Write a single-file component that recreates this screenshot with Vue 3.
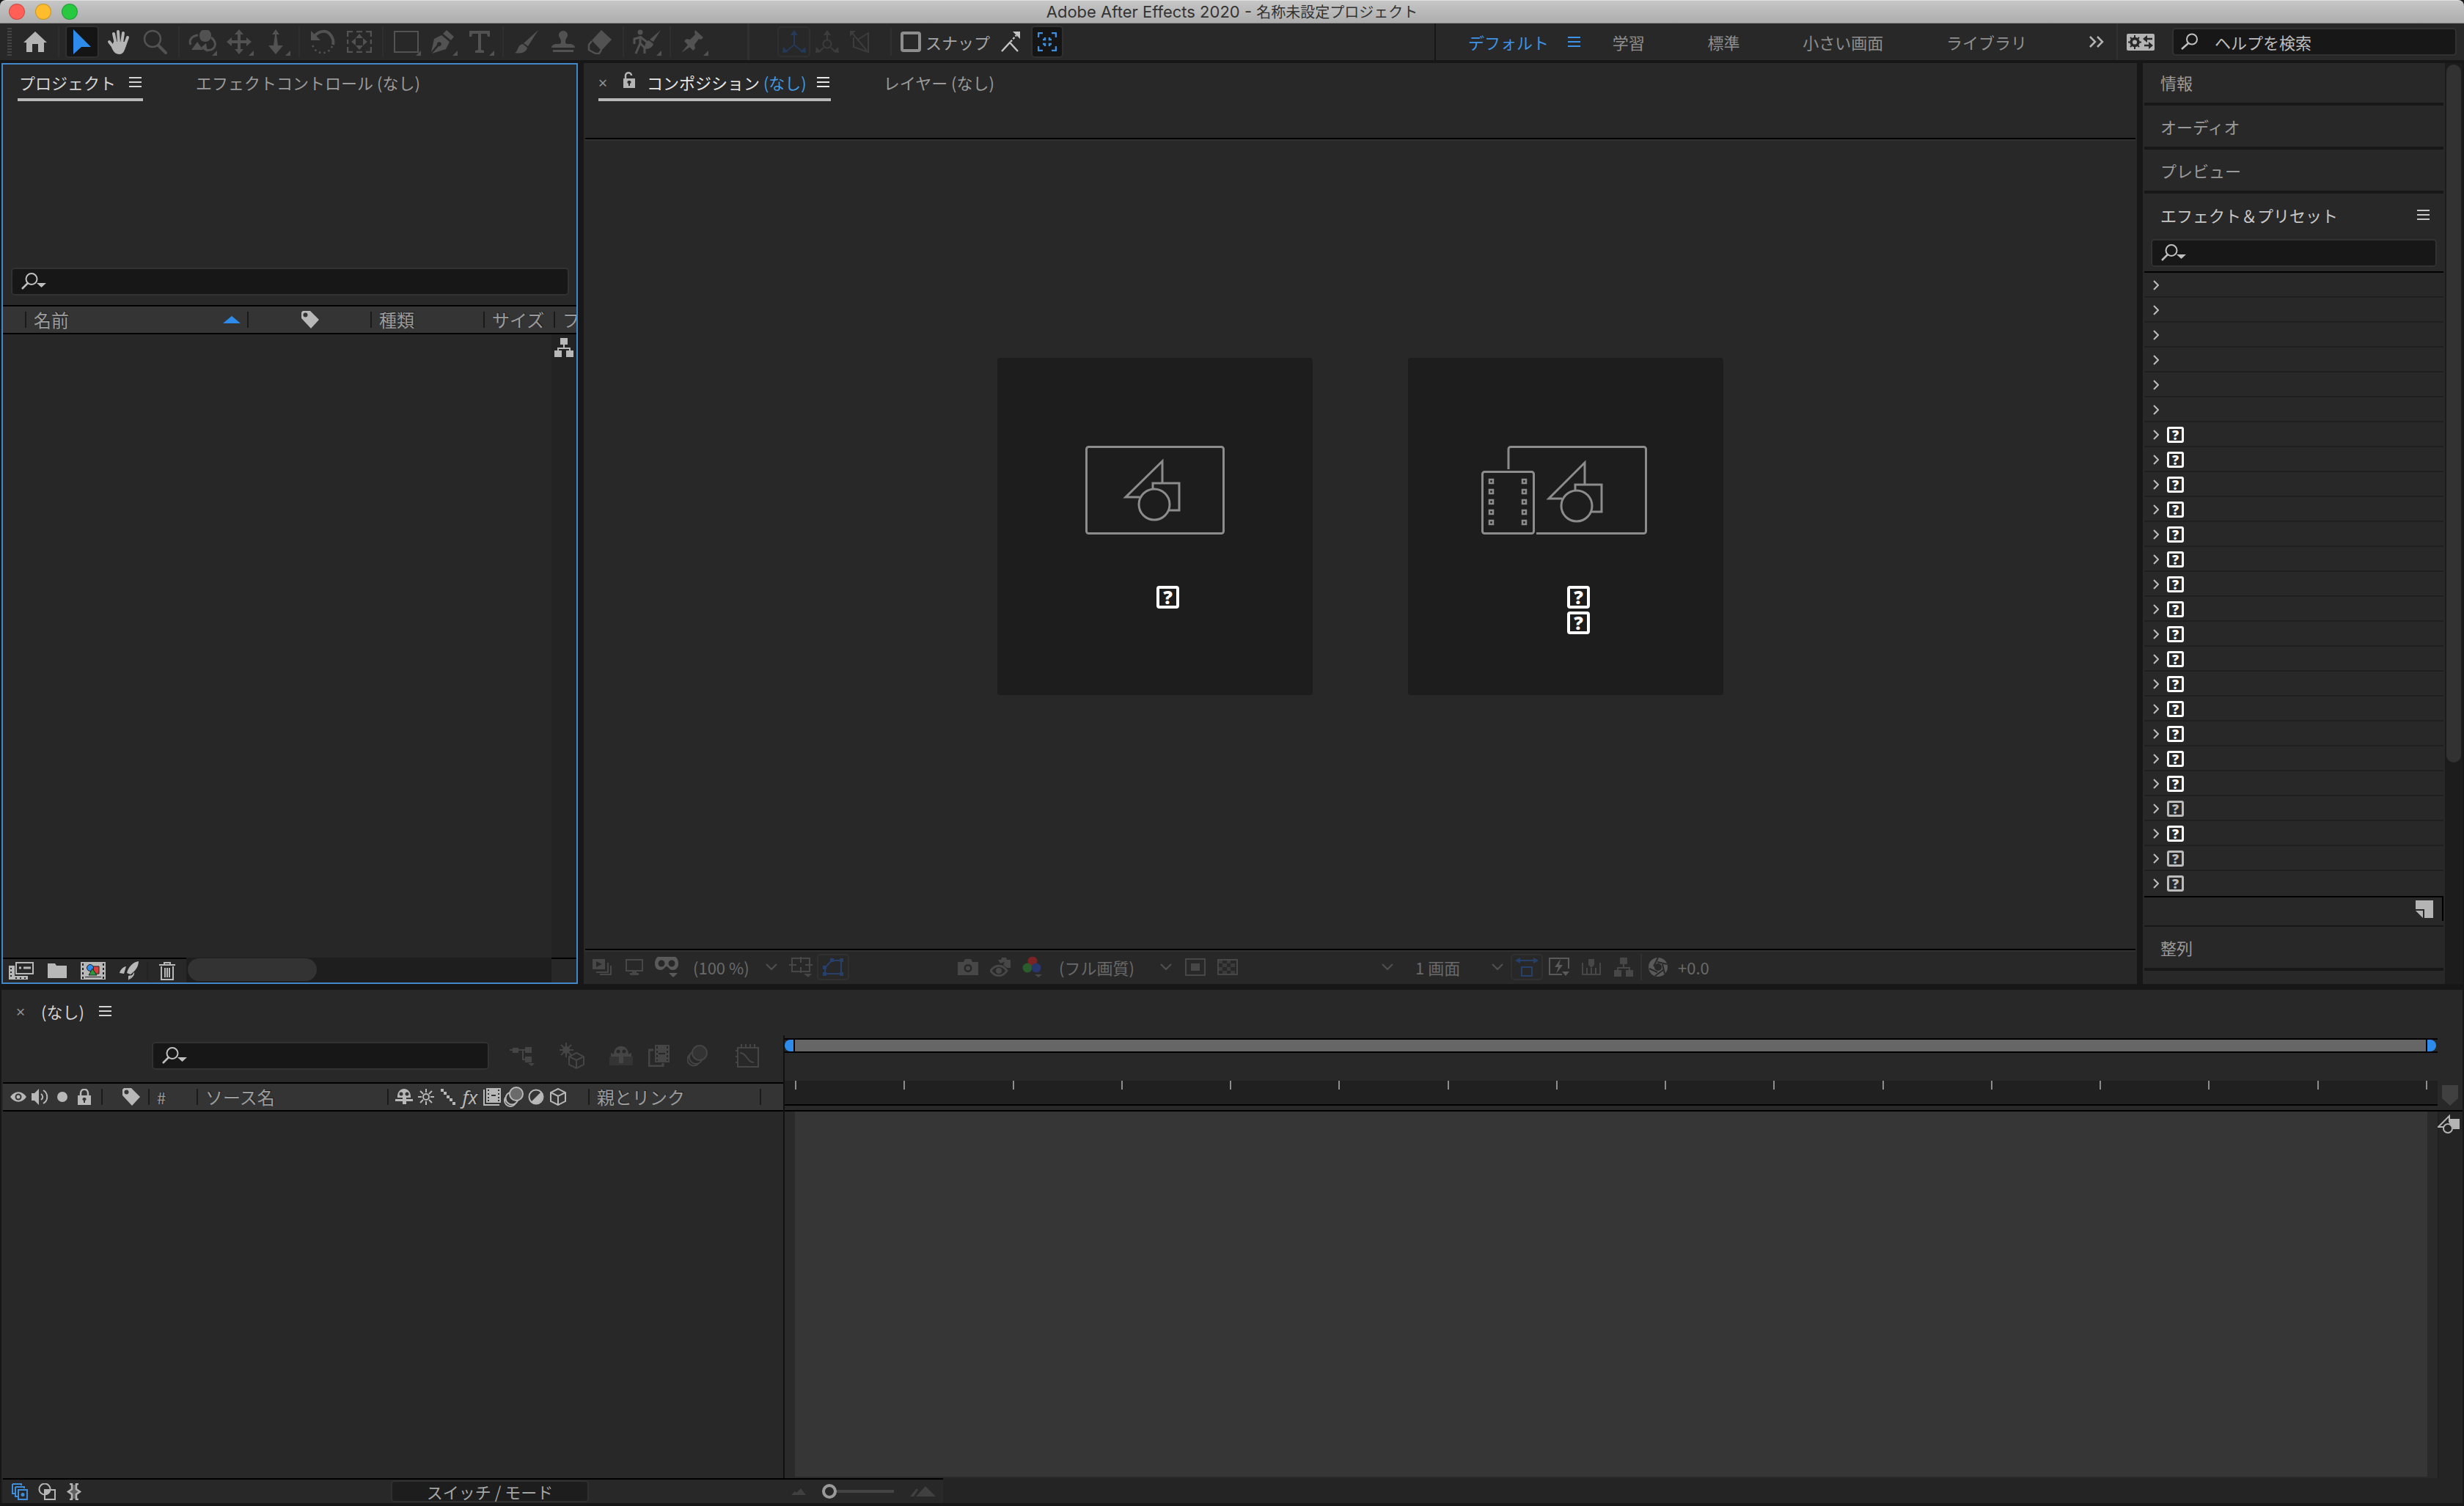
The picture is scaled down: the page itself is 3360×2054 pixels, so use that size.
<script setup>
import { h, ref } from 'vue'

const icons = {
  home: [32, 28, '<path d="M16 0 32 15h-4v13h-8V17h-8v11H4V15H0z"/>'],
  arrow: [24, 34, '<path d="M0 0l24 24H11L0 34z"/>'],
  hand: [32, 34, '<g fill="none" stroke="currentColor" stroke-width="4" stroke-linecap="round"><path d="M9 6l3 14M15 3l1 15M22 5l-2 14M28 11l-4 11M3 17l7 9"/></g><path d="M9 17h16l1 5c-2 7-4 12-9 12-6 0-9-4-11-10z"/>'],
  zoom: [34, 34, '<g fill="none" stroke="currentColor"><circle cx="13" cy="13" r="11" stroke-width="2.5"/><path d="M21 22l10 10" stroke-width="4" stroke-linecap="round"/></g>'],
  orbit: [38, 32, '<path d="M15 7a8 8 0 0 1 16 0c0 5-3 9-8 9-6 0-8-4-8-9z"/><g fill="none" stroke="currentColor" stroke-width="3"><path d="M13 7C5 8 0 13 3 20"/><path d="M31 10c6 5 7 11 3 15-3 3-8 3-12 1"/></g><path d="M4 27l8-11 8 11zM24 18l-7 6 9 6z"/>'],
  pan: [34, 34, '<path d="M17 0l6 7h-4v8h8v-4l7 6-7 6v-4h-8v8h4l-6 7-6-7h4v-8H7v4l-7-6 7-6v4h8V7h-4z"/>'],
  dolly: [22, 34, '<path d="M11 0l5 7h-4l2 15h7L11 34 1 22h7l2-15H6z"/>'],
  rotate: [36, 34, '<path d="M7 9C14 1 24 1 29 8c3 4 4 9 3 13" fill="none" stroke="currentColor" stroke-width="4"/><path d="M2 2v13h13z"/><path d="M31 23A14 14 0 0 1 4 20" fill="none" stroke="currentColor" stroke-width="2.5" stroke-dasharray="2.5 4"/>'],
  anchor: [34, 30, '<path d="M1 8V1h7M13 1h8M26 1h7v7M33 12v6M33 22v7h-7M21 29h-8M8 29H1v-7M1 18v-6" fill="none" stroke="currentColor" stroke-width="2.5"/><path d="M17 4l5 6H12zM17 26l5-6H12zM6 15l6-5v10zM28 15l-6-5v10z"/>'],
  rect: [34, 30, '<path d="M1 1h32v28H1z" fill="none" stroke="currentColor" stroke-width="2"/>'],
  pen: [34, 34, '<path d="M22 1l10 9-4 5-11-9zM15 8l11 9-5 10-19 6 9-10a3 3 0 1 0-2-2L1 31l4-18z"/>'],
  type: [28, 30, '<path d="M0 0h28v8h-3l-1-4h-8v22l4 1v3H8v-3l4-1V4H4L3 8H0z"/>'],
  brush: [34, 32, '<path d="M33 0L19 22l-6-4zM12 19l6 5c-1 6-8 9-17 7 5-2 3-11 11-12z"/>'],
  stamp: [34, 30, '<path d="M17 0a6 6 0 0 1 6 7c-1 3-3 4-3 8 0 3 2 3 5 3 5 0 8 2 8 5H1c0-3 3-5 8-5 3 0 5 0 5-3 0-4-2-5-3-8a6 6 0 0 1 6-7zM3 26h28v3H3z"/>'],
  eraser: [34, 34, '<path d="M19 1l14 13-14 15L6 15z"/><path d="M6 16L2 21v7l9 5h5l3-5" fill="none" stroke="currentColor" stroke-width="2.5"/>'],
  roto: [38, 34, '<circle cx="10" cy="4" r="3.5"/><path d="M10 9v11M10 11L2 13v7M11 11l9 7M10 19l-6 14M10 19l6 6v8" fill="none" stroke="currentColor" stroke-width="3"/><path d="M38 1L28 17l-5-3zM22 15l6 5c-1 5-7 8-14 6 4-2 1-9 8-11z"/>'],
  pin: [32, 32, '<path d="M18 0l11 10-3 3-3-1-6 8 1 5-3 3L3 15l3-3 5 1 7-7-1-3zM8 20l3 3L-1 31z"/>'],
  axisLocal: [32, 32, '<path d="M16 5v15L4 30M16 20l12 10" fill="none" stroke="currentColor" stroke-width="2"/><path d="M16 0l5 7H11zM0 31l1-8 7 7zM32 31l-1-8-7 7z"/>'],
  axisWorld: [32, 32, '<path d="M16 5v9M11 24l-7 6M21 24l7 6" fill="none" stroke="currentColor" stroke-width="2"/><circle cx="16" cy="19" r="5.5" fill="none" stroke="currentColor" stroke-width="2"/><path d="M16 0l5 7H11zM0 31l1-8 7 7zM32 31l-1-8-7 7z"/>'],
  axisView: [30, 32, '<path d="M6 10v13l20 7V4L12 13M4 4l20 24" fill="none" stroke="currentColor" stroke-width="2"/><path d="M1 1h8L1 9z"/>'],
  snapEdge: [26, 28, '<path d="M1 27l11-12 11 12" fill="none" stroke="currentColor" stroke-width="2.5"/><path d="M16 0h10v10z"/><path d="M13 14L21 5" fill="none" stroke="currentColor" stroke-width="2.5" stroke-dasharray="3 2"/>'],
  snapBox: [26, 26, '<path d="M1 7V1h6M19 1h6v6M25 19v6h-6M7 25H1v-6M7 10h3V7M16 7v3h3M7 16h3v3M16 19v-3h3" fill="none" stroke="currentColor" stroke-width="2.5"/>'],
  menu: [17, 15, '<path d="M0 0h17v2H0zM0 6h17v2H0zM0 12h17v2H0z"/>'],
  more: [22, 16, '<path d="M2 1l7 7-7 7M12 1l7 7-7 7" fill="none" stroke="currentColor" stroke-width="2.5"/>'],
  workspace: [38, 23, '<rect width="38" height="23" rx="2"/><g fill="none" stroke="#282828"><circle cx="11" cy="11.500" r="5" stroke-width="3.500"/><path d="M11 2v19M2 11.500h18M5 5l12 13M17 5L5 18" stroke-width="2"/><path d="M35 7h-10M24 16h10" stroke-width="2.500"/></g><circle cx="11" cy="11.500" r="3"/><path d="M28 2v10l-6-5zM30 11v10l6-5z" fill="#282828"/>'],
  search: [24, 24, '<circle cx="15" cy="8.500" r="7" fill="none" stroke="currentColor" stroke-width="2"/><path d="M10 14L1 22" stroke="currentColor" stroke-width="2.500"/>'],
  find: [34, 24, '<circle cx="14" cy="8.500" r="7.500" fill="none" stroke="currentColor" stroke-width="2"/><path d="M9 14L1 22" stroke="currentColor" stroke-width="2.500"/><path d="M21 14h13l-6.500 6z"/>'],
  lockOpen: [18, 22, '<path d="M2 9h16v13H2z"/><path d="M5 9V5c0-5 8-5 8 0" fill="none" stroke="currentColor" stroke-width="2.500"/><path d="M10 12a2 2 0 0 1 1 4v3H9v-3a2 2 0 0 1 1-4z" fill="#282828"/>'],
  lock: [18, 22, '<path d="M0 9h18v13H0z"/><path d="M4 10V6c0-7 10-7 10 0v4" fill="none" stroke="currentColor" stroke-width="2.500"/><path d="M9 12a2 2 0 0 1 1 4v3H8v-3a2 2 0 0 1 1-4z" fill="#343434"/>'],
  sort: [24, 10, '<path d="M12 0l12 10H0z"/>'],
  tag: [25, 24, '<path d="M2 0h10l12 12-11 12L0 10V2z"/><circle cx="5.500" cy="5.500" r="3" fill="#343434"/>'],
  tree: [26, 26, '<path d="M8 0h10v9H8zM0 17h10v9H0zM16 17h10v9H16z"/><path d="M13 8v6M5 18v-4h16v4" fill="none" stroke="currentColor" stroke-width="2"/>'],
  interpret: [34, 24, '<path d="M0 5h8v14h18v5H0zM2 8h2v2H2zm0 5h2v2H2zm0 5h2v2H2zm7 3h2v2H9zm6 0h2v2h-2zm6 0h2v2h-2z" fill-rule="evenodd"/><path d="M10 1h23v15H10z" fill="none" stroke="currentColor" stroke-width="2"/><path d="M14 8h3M20 8h10" stroke="currentColor" stroke-width="3"/>'],
  folder: [26, 20, '<path d="M0 0h10l2 3h14v17H0z"/>'],
  comp: [34, 24, '<path d="M0 0h34v24H0z"/><path d="M2 2h2v3H2zm0 6h2v3H2zm0 6h2v3H2zm0 6h2v3H2zM30 2h2v3h-2zm0 6h2v3h-2zm0 6h2v3h-2zm0 6h2v3h-2zM6 20h22v1H6z" fill="#222"/><path d="M17 6h8v10h-8z" fill="#e03b3b" stroke="#222"/><circle cx="13" cy="8" r="4.500" fill="#2d8ceb" stroke="#222"/><path d="M16 9l6 9H11z" fill="#2c9a3c" stroke="#222"/>'],
  rocket: [26, 26, '<path d="M26 0c-8 1-14 8-16 16l5 2C22 13 26 7 26 0zM9 7C4 8 1 12 0 16l6 1zM17 19l-5 7v-6M20 15c1 4-3 8-7 10"/>'],
  trash: [22, 25, '<path d="M0 4h22M7 4V1h8v3M3 6v18h16V6M8 8v13M11 8v13M14 8v13" fill="none" stroke="currentColor" stroke-width="2"/>'],
  chevronRight: [8, 14, '<path d="M1 1l6 6-6 6" fill="none" stroke="currentColor" stroke-width="2"/>'],
  chevronDown: [16, 10, '<path d="M1 1l7 7 7-7" fill="none" stroke="currentColor" stroke-width="2"/>'],
  newPreset: [24, 24, '<path d="M0 0h24v24H12V12H0zM0 14h10v10z"/>'],
  render: [26, 22, '<path d="M0 0h17v14H0zM5 3l8 4-8 4z" fill-rule="evenodd"/><path d="M21 5v13H5M25 9v12H10" fill="none" stroke="currentColor" stroke-width="2"/>'],
  monitor: [24, 22, '<path d="M1 1h22v15H1z" fill="none" stroke="currentColor" stroke-width="2"/><path d="M9 17h6v2h3v3H6v-3h3z"/>'],
  goggles: [32, 28, '<path d="M4 0h24c3 2 4 6 4 9 0 6-3 9-8 9-4 0-6-5-8-5s-4 5-8 5c-5 0-8-3-8-9 0-3 1-7 4-9z"/><circle cx="9" cy="9" r="4.500" fill="#282828"/><circle cx="23" cy="9" r="4.500" fill="#282828"/><path d="M19 22h12l-6 6z"/>'],
  grid: [32, 28, '<path d="M4 2h24v18H4zM16 0v8M16 14v8M0 11h10M22 11h10" fill="none" stroke="currentColor" stroke-width="2"/><path d="M20 23h11l-5 5z"/>'],
  mask: [28, 26, '<path d="M12 4h13v18H3v-8z" fill="none" stroke="currentColor" stroke-width="2"/><path d="M10 1h5v5h-5zM23 1h5v5h-5zM0 11h5v5H0zM0 20h5v5H0zM23 20h5v5h-5z"/>'],
  camera: [28, 22, '<path d="M0 4h8l2-4h8l2 4h8v18H0zM14 7a5.500 5.500 0 1 0 0 11 5.500 5.500 0 0 0 0-11z" fill-rule="evenodd"/><circle cx="14" cy="12.500" r="3"/>'],
  showShot: [28, 26, '<path d="M11 3h4l1-3h6l1 3h5v11h-5l-5-4 2-4-6 2z"/><path d="M1 18c6-9 16-9 22 0-6 9-16 9-22 0z" fill="none" stroke="currentColor" stroke-width="3"/><circle cx="12" cy="18" r="4"/>'],
  channels: [28, 28, '<circle cx="14" cy="6" r="6.500" fill="#7c2424"/><circle cx="7" cy="15" r="6.500" fill="#2b5c2b"/><circle cx="19" cy="15" r="6.500" fill="#29366e"/><path d="M17 24h10l-5 4z"/>'],
  region: [28, 24, '<path d="M1 1h26v22H1z" fill="none" stroke="currentColor" stroke-width="2"/><path d="M8 7h12v10H8z"/>'],
  checker: [28, 22, '<path d="M1 1h26v20H1z" fill="none" stroke="currentColor" stroke-width="2"/><path d="M2 2h5v4H2zM13 2h5v4h-5zM7 6h6v5H7zM18 6h6v5h-6zM2 11h5v5H2zM13 11h5v5h-5zM7 16h6v4H7zM18 16h6v4h-6z" opacity=".6"/>'],
  pixelAspect: [32, 26, '<path d="M6 4h20M9 13h14v12H9z" fill="none" stroke="currentColor" stroke-width="2"/><path d="M0 4l7-4v8zM32 4l-7-4v8z"/>'],
  fast: [28, 26, '<path d="M18 23H1V1h26v14" fill="none" stroke="currentColor" stroke-width="2"/><path d="M16 2L8 13h5l-3 9 9-12h-5zM18 19h10l-5 6z"/>'],
  timelineIcon: [26, 22, '<path d="M1 5v16h24V5M7 21v-9M13 21v-9M19 21v-9" fill="none" stroke="currentColor" stroke-width="2"/><path d="M9 0h8v8l-4 4-4-4z"/>'],
  aperture: [26, 26, '<circle cx="13" cy="13" r="9" fill="none" stroke="currentColor" stroke-width="8"/><path d="M13 0l-6 12M25 9l-13-3M22 22l-3-13M9 25l11-8M1 15l11 5" stroke="#282828" stroke-width="2"/>'],
  flow: [36, 28, '<path d="M0 6h30M18 6v13h10" fill="none" stroke="currentColor" stroke-width="2"/><path d="M4 3h8v7H4zM21 2h9v8h-9zM21 15h9v8h-9zM25 24h9l-4 4z"/>'],
  draft3d: [34, 36, '<path d="M9 0v20M0 10h19M2 3l14 14M16 3L2 17" stroke="currentColor" stroke-width="2"/><circle cx="9" cy="10" r="5"/><path d="M23 14l10 5v11l-10 5-10-5V19zM13 19l10 5 10-5M23 24v11" fill="none" stroke="currentColor" stroke-width="2"/>'],
  shyBig: [32, 28, '<path d="M6 12c0-15 20-15 20 0l4-2v5H2v-5z"/><path d="M13 14h6v10h-6z"/><path d="M0 15h32v12H0z" opacity=".4"/><circle cx="12" cy="8" r="2.500" fill="#282828"/><circle cx="20" cy="8" r="2.500" fill="#282828"/>'],
  frames: [30, 30, '<path d="M9 0h20v24H9z"/><path d="M7 7H1v22h19v-4" fill="none" stroke="currentColor" stroke-width="3"/><path d="M11 2h2v3h-2zm0 6h2v3h-2zm0 6h2v3h-2zm0 6h2v2h-2zM25 2h2v3h-2zm0 6h2v3h-2zm0 6h2v3h-2zm0 6h2v2h-2zM14 11h9v2h-9z" fill="#282828"/>'],
  blur: [28, 30, '<circle cx="9" cy="20" r="8" fill="none" stroke="currentColor" stroke-width="2"/><circle cx="11" cy="17" r="8.500" fill="#343434" stroke="currentColor" stroke-width="2"/><circle cx="17" cy="11" r="9" fill="#6a6a6a" stroke="currentColor" stroke-width="2"/>'],
  blurBig: [28, 30, '<circle cx="9" cy="20" r="8.500" fill="none" stroke="currentColor" stroke-width="2"/><circle cx="12" cy="17" r="9" fill="#282828" stroke="currentColor" stroke-width="2"/><circle cx="17" cy="11" r="10" fill="#333" stroke="currentColor" stroke-width="2"/>'],
  graph: [32, 32, '<path d="M3 5h28v26H3zM8 0v5M14 0v5M20 0v5M26 0v5M0 9h3M0 17h3M0 25h3M6 12c10 0 9 13 19 13" fill="none" stroke="currentColor" stroke-width="2"/>'],
  eye: [22, 14, '<path d="M0 7C6-2 16-2 22 7c-6 9-16 9-22 0z"/><circle cx="11" cy="7" r="4.500" fill="#343434"/><circle cx="11" cy="7" r="2.500"/>'],
  speaker: [24, 22, '<path d="M0 6h4l6-6v22l-6-6H0z"/><path d="M13 7c3 2 3 6 0 8M16 2c7 4 7 14 0 18" fill="none" stroke="currentColor" stroke-width="2"/>'],
  dot: [14, 14, '<circle cx="7" cy="7" r="7"/>'],
  shy: [24, 22, '<path d="M3 12c-1-16 19-16 18 0zM0 14h24v3H0zM10 12h5v9h-5z"/><circle cx="8" cy="7" r="2.500" fill="#343434"/><circle cx="16" cy="7" r="2.500" fill="#343434"/>'],
  sun: [22, 22, '<circle cx="11" cy="11" r="4" fill="none" stroke="currentColor" stroke-width="2"/><path d="M11 0v5M11 17v5M0 11h5M17 11h5M3 3l4 4M15 15l4 4M19 3l-4 4M7 15l-4 4" stroke="currentColor" stroke-width="2"/>'],
  quality: [20, 22, '<path d="M0 0h4v4H0zM4 4h4v4H4zM8 9h4v4H8zM12 13h4v4h-4zM16 18h4v4h-4z"/>'],
  film: [24, 24, '<path d="M4 0h20v20H4z"/><path d="M1 2v21h21" fill="none" stroke="currentColor" stroke-width="2"/><path d="M6 2h2v2H6zm0 5h2v2H6zm0 5h2v2H6zm0 4h2v2H6zM20 2h2v2h-2zm0 5h2v2h-2zm0 5h2v2h-2zm0 4h2v2h-2zM11 9h6v2h-6z" fill="#343434"/>'],
  adjust: [22, 22, '<circle cx="11" cy="11" r="9.500" fill="none" stroke="currentColor" stroke-width="2"/><path d="M18 4L4 18a10 10 0 0 0 14-14z"/>'],
  cube: [22, 24, '<path d="M11 1l10 5v12l-10 5-10-5V6zM1 6l10 5 10-5M11 11v12" fill="none" stroke="currentColor" stroke-width="2"/>'],
  layers: [22, 23, '<path d="M1 1h12v2M1 1v13h3M5 5h12v2M5 5v13h3M9 9h12v13H9z" fill="none" stroke="currentColor" stroke-width="2"/><circle cx="15" cy="15.500" r="2.500"/>'],
  modes: [24, 23, '<circle cx="9" cy="8" r="7.500" fill="none" stroke="currentColor" stroke-width="2"/><path d="M9 9h14v13H9z" fill="none" stroke="currentColor" stroke-width="2"/><path d="M9 9h7c0 4-3 7-7 7z"/>'],
  braces: [24, 23, '<path d="M6 1h3v7l-5 3.500L9 15v7H6M18 1h-3v7l5 3.500-5 3.500v7h3" fill="none" stroke="currentColor" stroke-width="2.500"/><path d="M9 2h6v6l4 3.500-4 3.500v6H9v-6l-4-3.500L9 8z" opacity=".4"/>'],
  hillSmall: [20, 9, '<path d="M0 9l5-5 2 2 6-6 7 9z"/>'],
  hillBig: [36, 14, '<path d="M0 14L9 3l2 2-6 9zM8 14L21 0l14 14z"/>'],
  marker: [22, 28, '<path d="M0 0h22v18L11 28 0 18z"/>'],
  shapes: [30, 26, '<path d="M16 6h14v14h-9a8 8 0 0 0-5-7z"/><path d="M8 17H1L16 2v9" fill="none" stroke="currentColor" stroke-width="2"/><circle cx="14" cy="19" r="6" fill="none" stroke="currentColor" stroke-width="2"/>'],
  newComp: [190, 121, '<g fill="none" stroke="currentColor" stroke-width="3"><rect x="1.500" y="1.500" width="187" height="118" rx="3"/><path d="M105 50V21L55 70h19M92 60v-9h36v37h-14"/><circle cx="94" cy="80" r="21"/></g>'],
  newCompFootage: [226, 121, '<g fill="none" stroke="currentColor" stroke-width="3"><path d="M37 32V4.500a3 3 0 0 1 3-3h181.500a3 3 0 0 1 3 3v112a3 3 0 0 1-3 3H75"/><rect x="1.500" y="35.500" width="70" height="84" rx="3"/><path d="M141 52V23L92 72h18M128 62v-9h36v37h-14"/><circle cx="130" cy="82" r="21"/></g><g fill="none" stroke="currentColor" stroke-width="2.500"><path d="M11 46h5v5h-5zM11 60h5v5h-5zM11 74h5v5h-5zM11 88h5v5h-5zM11 102h5v5h-5zM56 46h5v5h-5zM56 60h5v5h-5zM56 74h5v5h-5zM56 88h5v5h-5zM56 102h5v5h-5z"/></g>'],
}

const Icon = (props) => {
  const [width, height, body] = icons[props.name]
  return h('svg', { width, height, viewBox: `0 0 ${width} ${height}`, fill: 'currentColor', 'aria-hidden': 'true', innerHTML: body })
}
Icon.props = ['name']

const toolGroups = [
  [{ icon: 'home', label: 'ホーム', on: true }],
  [{ icon: 'arrow', label: '選択', active: true }, { icon: 'hand', label: '手のひら', on: true }, { icon: 'zoom', label: 'ズーム' }],
  [{ icon: 'orbit', label: 'カメラ', more: true }, { icon: 'pan', label: 'パン', more: true }, { icon: 'dolly', label: 'ドリー', more: true }],
  [{ icon: 'rotate', label: '回転' }, { icon: 'anchor', label: 'アンカーポイント' }],
  [{ icon: 'rect', label: '長方形', more: true }, { icon: 'pen', label: 'ペン', more: true }, { icon: 'type', label: '文字', more: true }],
  [{ icon: 'brush', label: 'ブラシ' }, { icon: 'stamp', label: 'コピースタンプ' }, { icon: 'eraser', label: '消しゴム' }],
  [{ icon: 'roto', label: 'ロトブラシ', more: true }],
  [{ icon: 'pin', label: 'パペットピン', more: true }],
]
const workspaces = ['学習', '標準', '小さい画面', 'ライブラリ']
const closedPanels = ['情報', 'オーディオ', 'プレビュー']
const dimRows = [21, 23, 24]
const effects = Array.from({ length: 25 }, (_, i) => ({ id: i, missing: i > 5, dim: dimRows.includes(i) }))
const switches = ['shy', 'sun', 'quality', 'fx', 'film', 'blur', 'adjust', 'cube']
const snap = ref(false)
const zoomLevel = ref(0)
</script>

<template>
  <div class="app">
    <header class="titlebar">
      <div class="lights">
        <button class="light red" aria-label="閉じる"></button>
        <button class="light yellow" aria-label="しまう"></button>
        <button class="light green" aria-label="拡大"></button>
      </div>
      <h1>Adobe After Effects 2020 - <span>名称未設定プロジェクト</span></h1>
    </header>

    <nav class="toolbar">
      <div class="grip"></div>
      <div v-for="(group, g) in toolGroups" :key="g" class="group">
        <button v-for="t in group" :key="t.icon" class="tool" :class="{ on: t.on, active: t.active, more: t.more }" :aria-label="t.label">
          <Icon :name="t.icon" />
        </button>
      </div>
      <div class="axes">
        <button class="axis picked" aria-label="ローカル軸"><Icon name="axisLocal" /></button>
        <button class="axis" aria-label="ワールド軸"><Icon name="axisWorld" /></button>
        <button class="axis" aria-label="ビュー軸"><Icon name="axisView" /></button>
      </div>
      <label class="snap"><input v-model="snap" type="checkbox" />スナップ</label>
      <button class="snap-edge" aria-label="エッジにスナップ"><Icon name="snapEdge" /></button>
      <button class="snap-box" aria-label="フィーチャにスナップ"><Icon name="snapBox" /></button>
      <div class="workspaces">
        <a href="#" class="current">デフォルト<Icon name="menu" /></a>
        <a v-for="w in workspaces" :key="w" href="#">{{ w }}</a>
      </div>
      <button class="overflow" aria-label="その他"><Icon name="more" /></button>
      <button class="manage" aria-label="ワークスペース設定"><Icon name="workspace" /></button>
      <label class="field help">
        <Icon name="search" />
        <input type="text" placeholder="ヘルプを検索" aria-label="ヘルプを検索" />
      </label>
    </nav>

    <main class="upper">
      <section class="panel project">
        <div class="tabs">
          <a href="#" class="tab selected">プロジェクト<Icon name="menu" /></a>
          <a href="#" class="tab">エフェクトコントロール (なし)</a>
        </div>
        <div class="preview"></div>
        <label class="field find">
          <Icon name="find" />
          <input type="text" aria-label="プロジェクトを検索" />
        </label>
        <table class="columns">
          <thead>
            <tr>
              <th class="c-edge"></th>
              <th class="c-name"><div class="cell">名前<Icon name="sort" class="sort" /></div></th>
              <th class="c-label"><div class="cell"><Icon name="tag" class="label-tag" /></div></th>
              <th class="c-kind"><div class="cell">種類</div></th>
              <th class="c-size"><div class="cell">サイズ</div></th>
              <th><div class="cell">フ</div></th>
            </tr>
          </thead>
        </table>
        <div class="items">
          <div class="items-list"></div>
          <div class="items-rail"><Icon name="tree" /></div>
        </div>
        <footer class="project-foot">
          <div class="foot-tools">
            <button aria-label="フッテージを変換"><Icon name="interpret" /></button>
            <button aria-label="新規フォルダー"><Icon name="folder" /></button>
            <button aria-label="新規コンポジション"><Icon name="comp" /></button>
            <button aria-label="プロジェクト設定"><Icon name="rocket" /></button>
            <button class="bin" aria-label="削除"><Icon name="trash" /></button>
          </div>
          <div class="hscroll"><div class="hthumb"></div></div>
          <div class="corner"></div>
        </footer>
      </section>

      <section class="panel viewer">
        <div class="tabs">
          <div class="tab selected">
            <button class="close" aria-label="閉じる">×</button>
            <Icon name="lockOpen" class="lock" />
            <a href="#">コンポジション <span class="none">(なし)</span></a>
            <Icon name="menu" />
          </div>
          <a href="#" class="tab">レイヤー (なし)</a>
        </div>
        <div class="strip"></div>
        <div class="stage">
          <button class="card" aria-label="新規コンポジション">
            <Icon name="newComp" />
            <span class="glyphs"><span class="missing big">?</span></span>
          </button>
          <button class="card" aria-label="フッテージから新規コンポジション">
            <Icon name="newCompFootage" />
            <span class="glyphs"><span class="missing big">?</span><span class="missing big">?</span></span>
          </button>
        </div>
        <footer class="viewer-foot">
          <div class="run">
            <button aria-label="常にプレビュー"><Icon name="render" /></button>
            <button aria-label="メインビュー"><Icon name="monitor" /></button>
            <button class="lit" aria-label="VR"><Icon name="goggles" /></button>
          </div>
          <div class="pick mag"><select aria-label="拡大率"><option>(100 %)</option></select><Icon name="chevronDown" /></div>
          <div class="run">
            <button aria-label="グリッド"><Icon name="grid" /></button>
            <button class="boxed" aria-label="マスク表示"><Icon name="mask" /></button>
          </div>
          <div class="run shots">
            <button aria-label="スナップショット"><Icon name="camera" /></button>
            <button aria-label="スナップショットを表示"><Icon name="showShot" /></button>
            <button aria-label="チャンネル"><Icon name="channels" /></button>
          </div>
          <div class="pick res"><select aria-label="解像度"><option>(フル画質)</option></select><Icon name="chevronDown" /></div>
          <div class="run">
            <button aria-label="目標範囲"><Icon name="region" /></button>
            <button aria-label="透明グリッド"><Icon name="checker" /></button>
          </div>
          <div class="pick cam"><select aria-label="3D ビュー"><option></option></select><Icon name="chevronDown" /></div>
          <div class="pick views"><select aria-label="ビューのレイアウト"><option>1 画面</option></select><Icon name="chevronDown" /></div>
          <div class="run">
            <button class="boxed" aria-label="ピクセル縦横比"><Icon name="pixelAspect" /></button>
            <button class="lit" aria-label="高速プレビュー"><Icon name="fast" /></button>
            <button aria-label="タイムライン"><Icon name="timelineIcon" /></button>
            <button aria-label="フローチャート"><Icon name="tree" /></button>
          </div>
          <div class="run exposure">
            <button class="lit" aria-label="露出をリセット"><Icon name="aperture" /></button>
            <span>+0.0</span>
          </div>
        </footer>
      </section>

      <aside class="side">
        <div class="stack">
          <h2 v-for="p in closedPanels" :key="p" class="folded">{{ p }}</h2>
          <div class="effects-head">
            <h2>エフェクト＆プリセット</h2>
            <Icon name="menu" />
          </div>
          <label class="field find fx-find">
            <Icon name="find" />
            <input type="text" aria-label="エフェクトを検索" />
          </label>
          <ul class="effects">
            <li v-for="e in effects" :key="e.id">
              <Icon name="chevronRight" />
              <span v-if="e.missing" class="missing" :class="{ dim: e.dim }">?</span>
            </li>
          </ul>
          <div class="effects-foot">
            <button aria-label="新規アニメーションプリセット"><Icon name="newPreset" /></button>
          </div>
          <h2 class="folded">整列</h2>
        </div>
        <div class="vscroll"><div class="vthumb"></div></div>
      </aside>
    </main>

    <section class="timeline">
      <div class="tl-tabs">
        <button class="close" aria-label="閉じる">×</button>
        <a href="#">(なし)</a>
        <Icon name="menu" />
      </div>
      <div class="tl-grid">
        <div class="tl-left">
          <div class="tl-tools">
            <label class="field find tl-find">
              <Icon name="find" />
              <input type="text" aria-label="レイヤーを検索" />
            </label>
            <button class="wide" aria-label="ミニフローチャート"><Icon name="flow" /></button>
            <button class="wide" aria-label="ドラフト 3D"><Icon name="draft3d" /></button>
            <button class="first" aria-label="シャイ"><Icon name="shyBig" /></button>
            <button aria-label="フレームブレンド"><Icon name="frames" /></button>
            <button aria-label="モーションブラー"><Icon name="blurBig" /></button>
            <button class="graph" aria-label="グラフエディター"><Icon name="graph" /></button>
          </div>
          <div class="tl-head">
            <div class="h-av"><Icon name="eye" /><Icon name="speaker" /><Icon name="dot" /><Icon name="lock" /></div>
            <div class="cell h-tag"><Icon name="tag" /></div>
            <div class="cell h-num">#</div>
            <div class="cell h-source">ソース名</div>
            <div class="cell h-switch">
              <template v-for="s in switches" :key="s">
                <i v-if="s === 'fx'" class="fx">fx</i>
                <span v-else class="slot"><Icon :name="s" /></span>
              </template>
            </div>
            <div class="cell h-parent">親とリンク</div>
            <div class="cell h-end"></div>
          </div>
          <div class="tl-layers"></div>
        </div>
        <div class="tl-tracks">
          <div class="workarea">
            <span class="handle start"></span>
            <div class="bar"></div>
            <span class="handle end"></span>
          </div>
          <div class="ruler-top"></div>
          <div class="ruler"><i v-for="n in 16" :key="n" class="tick"></i></div>
          <div class="cache"></div>
          <div class="lanes"><div class="lane"></div></div>
        </div>
        <div class="tl-rail">
          <div class="rail-top"><Icon name="marker" /></div>
          <div class="rail-body"><Icon name="shapes" /></div>
        </div>
      </div>
      <footer class="tl-foot">
        <div class="tl-foot-main">
          <div class="panes">
            <button class="blue" aria-label="レイヤースイッチ"><Icon name="layers" /></button>
            <button aria-label="転送制御"><Icon name="modes" /></button>
            <button aria-label="イン・アウト"><Icon name="braces" /></button>
          </div>
          <button class="toggle">スイッチ / モード</button>
          <div class="zoomer">
            <Icon name="hillSmall" />
            <input v-model="zoomLevel" type="range" min="0" max="100" aria-label="ズーム" />
            <Icon name="hillBig" />
          </div>
        </div>
      </footer>
    </section>
  </div>
</template>

<style>
body { background: #171717; }
</style>

<style scoped>
.app, .app * { box-sizing: border-box; }
.app {
  min-height: 100vh; display: flex; flex-direction: column; padding-bottom: 4px;
  background: #171717; color: #9a9a9a;
  font-family: "Noto Sans CJK JP", "Noto Sans", sans-serif; font-size: 22px; line-height: 32px; overflow: hidden;
}
svg { display: block; flex: none; }
button { display: flex; align-items: center; justify-content: center; padding: 0; border: 0; background: none; color: inherit; font: inherit; flex: none; }
a { color: inherit; text-decoration: none; white-space: nowrap; }
h1, h2 { margin: 0; font-size: inherit; font-weight: 400; }
input { font: inherit; color: inherit; }

.titlebar { position: relative; height: 32px; display: flex; align-items: center; justify-content: center; border-radius: 8px 8px 0 0; border-top: 1px solid #e0e0e0; border-bottom: 1px solid #8c8c8c; background: linear-gradient(#c6c6c6, #adadad); color: #333; }
.titlebar h1 { font: 22px/28px Inter, "Noto Sans CJK JP", sans-serif; white-space: nowrap; }
.titlebar span { font-size: 20px; }
.lights { position: absolute; left: 12px; top: 4px; display: flex; gap: 14px; }
.light { width: 22px; height: 22px; border-radius: 50%; border: 1px solid #0003; }
.red { background: #ff5f57; }
.yellow { background: #ffbd2e; }
.green { background: #28c940; }

.toolbar { height: 50px; margin-bottom: 4px; display: flex; align-items: center; background: #282828; color: #525252; }
.grip { width: 6px; height: 38px; margin: 0 7px 0 10px; background: repeating-linear-gradient(#444 0 2px, transparent 2px 4px); }
.group { display: flex; align-items: center; }
.group + .group::before { content: ""; width: 2px; height: 42px; margin: 0 6px; background: #2f2f2f; }
.tool { position: relative; width: 50px; height: 44px; }
.tool.on { color: #b4b4b4; }
.tool.active { width: 46px; margin: 0 2px; border: 2px solid #303030; border-radius: 5px; background: #151515; color: #2d8ceb; }
.tool.more::after { content: ""; position: absolute; right: 5px; bottom: 3px; width: 7px; height: 7px; background: #525252; clip-path: polygon(100% 0, 100% 100%, 0 100%); }
.axes { align-self: stretch; display: flex; align-items: center; margin-left: 48px; padding-left: 38px; padding-right: 19px; border-left: 3px solid #303030; color: #3c3c3c; }
.axis { width: 45px; height: 42px; }
.picked { border: 2px solid #303030; border-radius: 5px; color: #243a58; }
.snap { display: flex; align-items: center; gap: 6px; padding-left: 12px; border-left: 2px solid #303030; height: 38px; color: #a5a5a5; white-space: nowrap; }
.snap input { appearance: none; width: 28px; height: 28px; margin: 0; border: 4px solid #8d8d8d; border-radius: 4px; }
.snap-edge { width: 56px; height: 44px; color: #c4c4c4; }
.snap-box { width: 44px; height: 44px; border: 2px solid #303030; border-radius: 5px; background: #151515; color: #3e8edb; }
.workspaces { flex: 1; align-self: stretch; display: flex; align-items: center; justify-content: space-between; max-width: 808px; margin-left: auto; padding-left: 44px; border-left: 2px solid #161616; }
.workspaces a { color: #8f8f8f; }
.workspaces .current { display: flex; align-items: center; gap: 26px; color: #3e93e6; }
.workspaces .current + a { margin-left: -42px; }
.overflow { margin: 0 0 0 84px; color: #b4b4b4; }
.manage { align-self: stretch; margin-left: 16px; padding: 0 24px 0 12px; border-left: 2px solid #303030; color: #b4b4b4; }
.field { display: flex; align-items: center; height: 38px; border: 2px solid #323232; border-radius: 5px; background: #171717; color: #c0c0c0; }
.field input { flex: 1; min-width: 0; height: 30px; padding: 0; border: 0; background: none; outline: 0; }
.field input::placeholder { color: #bebebe; opacity: 1; }
.help { width: 388px; margin-right: 10px; padding-left: 10px; gap: 22px; }

.upper { flex: 1256 1 0; min-height: 0; display: grid; grid-template-columns: minmax(0, 786fr) minmax(0, 2118fr) minmax(0, 436fr); gap: 8px; padding: 0 2px; }
.panel { display: flex; flex-direction: column; min-width: 0; background: #282828; }
.project { border: 2px solid #4287ca; }
.tabs { display: flex; align-items: stretch; height: 50px; padding: 0 20px; }
.tab { display: flex; align-items: center; height: 50px; padding: 2px 2px 0; border-bottom: 4px solid transparent; margin-right: 70px; }
.tab.selected { color: #d4d4d4; border-color: #b8b8b8; }
.project .tab.selected { gap: 18px; }
.close { width: 12px; color: #8f8f8f; font-family: "Noto Sans", sans-serif; }
.viewer .tabs { height: 52px; }
.viewer .tab { height: 52px; padding-top: 4px; }
.viewer .tab.selected { gap: 14px; color: #e8e8e8; padding-left: 0; }
.viewer .lock { color: #b4b4b4; margin: 0 2px 6px 6px; }
.none { color: #4398e0; }
.preview { height: 227px; }
.find { padding-left: 12px; }
.project .find { margin: 0 10px 0 11px; }
.columns { width: 100%; margin-top: 13px; table-layout: fixed; border-collapse: collapse; background: #343434; }
.columns thead { border-top: 2px solid #000; border-bottom: 2px solid #000; }
.columns th { height: 38px; padding: 0; font-weight: 400; text-align: left; overflow: hidden; }
.cell { display: flex; align-items: center; height: 22px; padding-left: 10px; border-left: 2px solid #1a1a1a; font-size: 24px; color: #9c9c9c; text-shadow: 1px -1px #1c1c1c; white-space: nowrap; }
.c-edge { width: 30px; }
.c-name { width: 303px; }
.c-label { width: 168px; }
.c-kind { width: 154px; }
.c-size { width: 96px; }
.sort { margin-left: auto; margin-right: 9px; color: #2d8ceb; }
.label-tag { margin-left: 62px; color: #b8b8b8; }
.items { flex: 1; display: flex; }
.items-list { flex: 1; background: #272727; }
.items-rail { width: 34px; padding: 5px 4px; background: #232323; color: #b8b8b8; }
.project-foot { display: flex; height: 34px; }
.foot-tools { display: flex; align-items: center; width: 250px; border-top: 2px solid #000; color: #b8b8b8; }
.foot-tools button { width: 49px; }
.foot-tools .bin { width: 54px; border-left: 2px solid #232323; }
.hscroll { flex: 1; padding: 1px 2px; background: #1e1e1e; }
.hthumb { width: 176px; height: 31px; border-radius: 16px; background: #333; }
.corner { width: 34px; border-top: 2px solid #000; }

.strip { height: 54px; margin: 0 2px; border-bottom: 2px solid #323232; box-shadow: inset 0 -2px #000; }
.stage { flex: 1; display: flex; justify-content: center; gap: 130px; padding-top: 296px; }
.card { width: 430px; height: 460px; flex-direction: column; justify-content: flex-start; padding-top: 120px; border-radius: 4px; background: #1d1d1d; color: #8c8c8c; }
.card + .card svg { margin-right: 5px; }
.glyphs { display: flex; flex-direction: column; gap: 4px; margin: 70px 0 0 35px; }
.missing { display: flex; align-items: center; justify-content: center; width: 23px; height: 22px; border: 3px solid #fff; border-radius: 3px; color: #fff; font: 900 18px/16px "Noto Sans", sans-serif; }
.missing.big { width: 31px; height: 31px; border-width: 4px; border-radius: 4px; font-size: 25px; line-height: 23px; }
.missing.dim { border-color: #bcbcbc; color: #bcbcbc; }
.viewer-foot { display: flex; align-items: center; height: 48px; margin: 0 2px; padding-left: 1px; border-top: 2px solid #000; box-shadow: inset 0 2px #323232; color: #474747; overflow: hidden; }
.run { display: flex; align-items: center; }
.run button { width: 44px; height: 36px; }
.run .lit { color: #5a5a5a; }
.run .boxed { border: 2px solid #303030; border-radius: 5px; color: #27406a; }
.shots { margin-left: 140px; }
.pick { display: flex; align-items: center; flex: none; color: #505050; }
.pick select { appearance: none; flex: 1; min-width: 0; padding: 0; border: 0; outline: 0; height: 36px; background: none; font: 22px/34px "Noto Sans CJK JP", sans-serif; color: #6a6a6a; }
.mag { width: 115px; margin: 0 10px 0 14px; }
.res { width: 154px; margin: 0 10px 0 14px; }
.cam { width: 180px; margin: 0 30px 0 24px; }
.views { width: 120px; margin-right: 10px; }
.exposure { border-left: 2px solid #323232; margin-left: 1px; color: #6a6a6a; gap: 5px; }

.side { display: flex; min-width: 0; }
.stack { flex: 1; display: flex; flex-direction: column; padding: 0 2px; background: #282828; }
.folded { height: 60px; padding: 14px 0 0 22px; border-bottom: 4px solid #171717; line-height: 28px; }
.folded:first-child { height: 58px; padding-top: 12px; }
.effects-head { display: flex; justify-content: space-between; align-items: center; height: 62px; padding: 0 19px 4px 22px; color: #c8c8c8; }
.fx-find { margin: 0 9px 6px; }
.effects { margin: 0; padding: 0; list-style: none; border-top: 2px solid #000; border-bottom: 2px solid #000; }
.effects li { display: flex; align-items: center; gap: 11px; height: 34px; padding-left: 12px; box-shadow: inset 0 -2px #1f1f1f; color: #bdbdbd; }
.effects li:last-child { box-shadow: none; }
.effects-foot { height: 40px; display: flex; justify-content: flex-end; padding: 0 0 6px; border-bottom: 2px solid #171717; color: #b4b4b4; }
.effects-foot button { width: 38px; border-right: 2px solid #000; padding-right: 12px; }
.vscroll { width: 24px; padding: 2px; background: #1c1c1c; }
.vthumb { height: 76%; border-radius: 10px; background: #323232; }

.timeline { flex: 700 1 0; min-height: 0; display: flex; flex-direction: column; margin: 8px 2px 0; background: #282828; }
.tl-tabs { display: flex; align-items: center; height: 62px; padding: 0 20px 4px; color: #d4d4d4; }
.tl-tabs a { margin: 0 20px 0 22px; }
.tl-grid { flex: 1; display: grid; grid-template-columns: minmax(0, 1066fr) minmax(0, 2256fr) minmax(0, 34fr); }
.tl-left { display: flex; flex-direction: column; padding-left: 2px; }
.tl-tools { display: flex; align-items: center; height: 64px; padding: 0 20px 8px 203px; color: #454545; }
.tl-find { flex: none; width: 460px; margin-right: 12px; }
.tl-tools button { width: 52px; }
.tl-tools .wide { width: 67px; }
.tl-tools .first { margin-left: 8px; }
.tl-tools .graph { margin-left: 16px; }
.tl-head { display: flex; align-items: center; height: 40px; border-top: 2px solid #000; border-bottom: 2px solid #000; background: #343434; color: #b8b8b8; }
.h-av { display: grid; grid-template-columns: repeat(4, 30px); place-items: center; width: 134px; padding-left: 6px; }
.tl-head .h-tag { width: 64px; padding-left: 27px; color: #b8b8b8; }
.tl-head .h-num { width: 66px; font-size: 22px; }
.h-source { width: 260px; }
.tl-head .h-switch { width: 274px; padding-left: 6px; color: #b8b8b8; }
.slot, .fx { display: flex; justify-content: center; width: 30px; }
.fx { font: italic 26px/24px "Noto Sans", sans-serif; }
.h-parent { width: 234px; }
.tl-layers { flex: 1; }
.tl-tracks { display: flex; flex-direction: column; padding-top: 2px; border-left: 2px solid #111; }
.workarea { display: flex; margin-top: 2px; height: 20px; padding-right: 2px; border: 2px solid #000; border-width: 2px 0; }
.bar { flex: 1; border: 2px solid #000; border-width: 0 2px; background: #666; }
.handle { width: 12px; background: #2d8ceb; }
.start { border-radius: 10px 0 0 10px; }
.end { border-radius: 0 10px 10px 0; }
.ruler-top { height: 38px; }
.ruler { display: flex; justify-content: space-between; height: 34px; padding: 0 14px; background: #202020; border-bottom: 2px solid #000; }
.tick { width: 2px; height: 12px; background: #8c8c8c; }
.cache { height: 8px; border-bottom: 2px solid #000; }
.lanes { flex: 1; display: flex; padding: 0 14px 2px; background: #2a2a2a; }
.lane { flex: 1; background: #363636; }
.tl-rail { display: flex; flex-direction: column; color: #b4b4b4; }
.rail-top { height: 104px; padding: 68px 6px 0; border-bottom: 2px solid #000; color: #404040; }
.rail-body { flex: 1; padding-top: 4px; background: #242424; border-left: 2px solid #202020; }
.rail-body svg { margin-left: -2px; }
.tl-foot { height: 34px; display: flex; background: #242424; }
.tl-foot-main { display: flex; align-items: center; width: 1282px; margin-left: 2px; border-top: 2px solid #000; background: #282828; }
.panes { display: flex; width: 529px; padding-left: 4px; color: #b4b4b4; }
.panes button { width: 37px; }
.panes .blue { color: #3e8edb; }
.toggle { width: 270px; height: 30px; border: 2px solid #303030; border-radius: 5px; background: #1d1d1d; color: #a5a5a5; line-height: 26px; }
.zoomer { display: flex; align-items: center; flex: 1; justify-content: flex-end; gap: 22px; padding-right: 9px; color: #404040; }
.zoomer input { appearance: none; width: 98px; height: 20px; margin: 0; background: linear-gradient(#444, #444) center / 100% 4px no-repeat; }
.zoomer input::-webkit-slider-thumb { appearance: none; width: 20px; height: 20px; border: 4px solid #9a9a9a; border-radius: 50%; background: #282828; }
</style>
